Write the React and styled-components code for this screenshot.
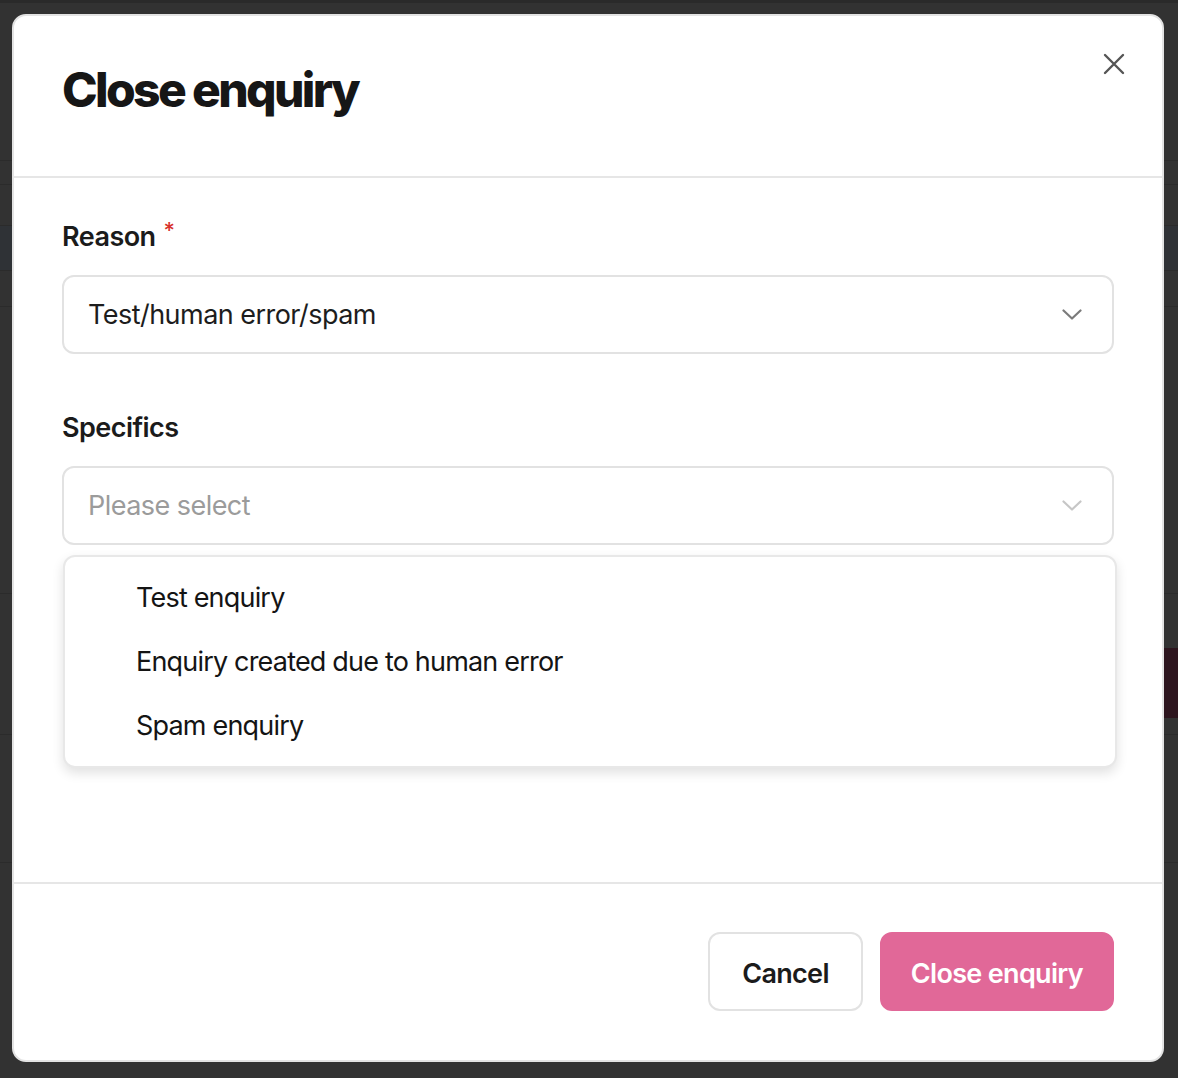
import styled, { createGlobalStyle } from 'styled-components';

const GlobalStyle = createGlobalStyle`
  html, body {
    margin: 0;
    padding: 0;
  }
  body {
    font-family: Inter, "Noto Sans", sans-serif;
    background: #323232;
    overflow: hidden;
    -webkit-font-smoothing: antialiased;
  }
`;

/* page underneath the overlay, already dimmed */
const Page = styled.div`
  height: 1078px;
  display: flex;
  flex-direction: column;
  background: #323232;
`;

const TopStrip = styled.div`
  height: 3px;
  background: #2a2a2a;
`;

const PageRow = styled.div`
  height: ${(p) => p.h}px;
  flex-shrink: 0;
  border-bottom: 1px solid #2b2b2b;
  background: ${(p) => p.tint || 'transparent'};
  display: flex;
  flex-direction: column;
`;

const Accent = styled.div`
  margin: 54px 0 0 auto;
  width: 200px;
  height: 70px;
  background: #2d151e;
`;

const Dialog = styled.div`
  position: fixed;
  top: 14px;
  left: 12px;
  width: 1152px;
  height: 1048px;
  box-sizing: border-box;
  background: #fff;
  border: 2px solid #e3e3e3;
  border-radius: 14px;
  display: flex;
  flex-direction: column;
  color: #1b1b1b;
`;

const Header = styled.div`
  flex-shrink: 0;
  box-sizing: border-box;
  height: 162px;
  border-bottom: 2px solid #e6e6e6;
  padding: 46px 48px 0;
`;

const Title = styled.h1`
  margin: 0;
  font-size: 48px;
  line-height: 56px;
  font-weight: 800;
  letter-spacing: -0.055em;
  color: #161616;
`;

const CloseButton = styled.button`
  position: absolute;
  top: 32px;
  right: 32px;
  width: 32px;
  height: 32px;
  padding: 0;
  border: none;
  background: none;
  display: flex;
  align-items: center;
  justify-content: center;
  cursor: pointer;
`;

const Body = styled.div`
  flex: 1;
  padding: 36px 48px 0;
  display: flex;
  flex-direction: column;
`;

const Field = styled.div`
  display: flex;
  flex-direction: column;
  gap: 22px;
  margin-bottom: ${(p) => p.mb || 0}px;
  position: relative;
`;

const Label = styled.label`
  font-size: 27px;
  line-height: 32px;
  font-weight: 600;
  letter-spacing: -0.02em;
  color: #1b1b1b;
`;

const Required = styled.span`
  color: #d8322c;
  font-size: 22px;
  font-weight: 500;
  margin-left: 8px;
  vertical-align: 8px;
`;

const Select = styled.div`
  height: 79px;
  flex-shrink: 0;
  box-sizing: border-box;
  border: 2px solid #e2e2e2;
  border-radius: 12px;
  padding: 0 30px 0 24px;
  display: flex;
  align-items: center;
  justify-content: space-between;
  background: #fff;
`;

const SelectText = styled.span`
  font-size: 27px;
  font-weight: 400;
  letter-spacing: -0.02em;
  color: ${(p) => (p.placeholder ? '#9b9b9b' : '#1d1d1d')};
`;

const Menu = styled.ul`
  position: absolute;
  top: calc(100% + 10px);
  left: 1px;
  right: -3px;
  margin: 0;
  padding: 8px 0 9px;
  list-style: none;
  background: #fff;
  border: 2px solid #e8e8e8;
  border-radius: 12px;
  box-shadow: 0 5px 12px rgba(0, 0, 0, 0.12);
  z-index: 2;
`;

const MenuItem = styled.li`
  height: 64px;
  display: flex;
  align-items: center;
  padding-left: 71px;
  font-size: 27px;
  letter-spacing: -0.03em;
  color: #141414;
`;

const Footer = styled.div`
  flex-shrink: 0;
  border-top: 2px solid #e6e6e6;
  padding: 48px 48px 49px;
  display: flex;
  justify-content: flex-end;
  gap: 17px;
`;

const Button = styled.button`
  height: 79px;
  box-sizing: border-box;
  padding: 3px ${(p) => (p.primary ? 29 : 32)}px 0;
  border-radius: 12px;
  border: 2px solid ${(p) => (p.primary ? '#e16898' : '#e2e2e2')};
  background: ${(p) => (p.primary ? '#e16898' : '#fff')};
  color: ${(p) => (p.primary ? '#fff' : '#1b1b1b')};
  font-family: inherit;
  font-size: 27px;
  font-weight: 600;
  letter-spacing: -0.025em;
  cursor: pointer;
`;

const Chevron = ({ color }) => (
  <svg width="20" height="11" viewBox="0 0 20 11" fill="none">
    <polyline
      points="1.5,1.5 10,9.5 18.5,1.5"
      stroke={color}
      strokeWidth="2.2"
      strokeLinecap="round"
      strokeLinejoin="round"
    />
  </svg>
);

const XIcon = () => (
  <svg width="22" height="22" viewBox="0 0 22 22" fill="none">
    <path d="M2 2L20 20M20 2L2 20" stroke="#555" strokeWidth="2.4" strokeLinecap="round" />
  </svg>
);

const options = ['Test enquiry', 'Enquiry created due to human error', 'Spam enquiry'];

function App() {
  return (
    <>
      <GlobalStyle />
      <Page>
        <TopStrip />
        <PageRow h={157} />
        <PageRow h={23} />
        <PageRow h={40} />
        <PageRow h={44} tint="#2f3236" />
        <PageRow h={35} />
        <PageRow h={286} />
        <PageRow h={140}>
          <Accent />
        </PageRow>
        <PageRow h={127} />
      </Page>

      <Dialog role="dialog">
        <Header>
          <Title>Close enquiry</Title>
          <CloseButton aria-label="Close">
            <XIcon />
          </CloseButton>
        </Header>

        <Body>
          <Field mb={58}>
            <Label>
              Reason<Required>*</Required>
            </Label>
            <Select>
              <SelectText>Test/human error/spam</SelectText>
              <Chevron color="#7b7b7b" />
            </Select>
          </Field>

          <Field>
            <Label>Specifics</Label>
            <Select>
              <SelectText placeholder>Please select</SelectText>
              <Chevron color="#c6c6c6" />
            </Select>
            <Menu>
              {options.map((o) => (
                <MenuItem key={o}>{o}</MenuItem>
              ))}
            </Menu>
          </Field>
        </Body>

        <Footer>
          <Button>Cancel</Button>
          <Button primary>Close enquiry</Button>
        </Footer>
      </Dialog>
    </>
  );
}

export default App;
